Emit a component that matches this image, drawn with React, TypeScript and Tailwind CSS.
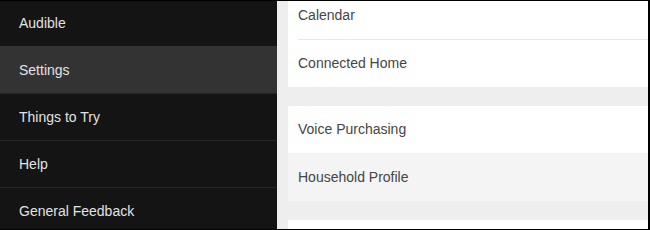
import React from "react";

const side = ["Audible", "Settings", "Things to Try", "Help", "General Feedback"];

export default function App() {
  return (
    <div
      className="w-[650px] h-[230px] overflow-hidden border-t border-b border-r-2 border-black flex bg-[#eeeeee]"
      style={{ fontFamily: '"Liberation Sans", Arial, sans-serif' }}
    >
      <div className="w-[277px] shrink-0 bg-[#141414] flex flex-col text-[14px] text-[#e2e2e2]">
        <div className="h-[45px] shrink-0 flex items-center pl-[19px]">Audible</div>
        <div className="h-[47px] shrink-0 flex items-center pl-[19px] pt-[2px] bg-[#333333]">Settings</div>
        <div className="h-[47px] shrink-0 flex items-center pl-[19px] border-t border-[#262626]">Things to Try</div>
        <div className="h-[47px] shrink-0 flex items-center pl-[19px] border-t border-[#262626]">Help</div>
        <div className="h-[47px] shrink-0 flex items-center pl-[19px] border-t border-[#262626]">General Feedback</div>
      </div>
      <div className="flex-1 pl-[11px] flex flex-col text-[14px] text-[#454545]">
        <div className="-mt-[9px] bg-white flex flex-col shrink-0">
          <div className="ml-[10px] h-[48px] flex items-center border-b border-[#e8e8e8]">Calendar</div>
          <div className="pl-[10px] h-[47px] flex items-center">Connected Home</div>
        </div>
        <div className="h-[19px] shrink-0" />
        <div className="bg-white flex flex-col shrink-0">
          <div className="pl-[10px] h-[47px] flex items-center">Voice Purchasing</div>
          <div className="pl-[10px] h-[48px] flex items-center bg-[#f4f4f4]">Household Profile</div>
        </div>
        <div className="h-[19px] shrink-0" />
        <div className="bg-white flex-1" />
      </div>
    </div>
  );
}
